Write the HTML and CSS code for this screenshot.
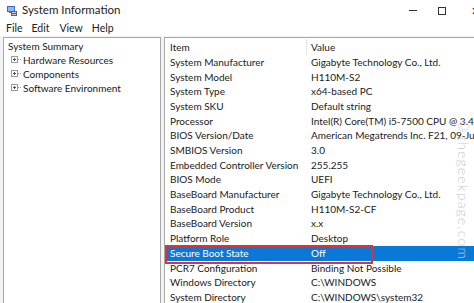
FILE: index.html
```html
<!DOCTYPE html>
<html>
<head>
<meta charset="utf-8">
<link rel="stylesheet" href="styles.css">
</head>
<body>
<div class="window">
  <div class="titlebar">
    <svg class="app-icon" width="12" height="12" viewBox="0 0 12 12">
      <rect x="1" y="1" width="8" height="6" fill="#3a6fc4"/>
      <rect x="2" y="2" width="6" height="4" fill="#8fb8ef"/>
      <rect x="3" y="7" width="4" height="1" fill="#666"/>
      <rect x="5" y="6" width="6" height="5" fill="#5a6270"/>
      <rect x="6" y="7" width="4" height="1" fill="#c9ced6"/>
      <rect x="6" y="9" width="4" height="1" fill="#c9ced6"/>
    </svg>
    <span class="title">System Information</span>
    <div class="controls">
      <span class="ctl min"></span>
      <span class="ctl max"></span>
      <span class="ctl close">✕</span>
    </div>
  </div>
  <div class="menubar">
    <span>File</span><span>Edit</span><span>View</span><span>Help</span>
  </div>
  <div class="panes">
    <div class="tree">
      <div class="node root">System Summary</div>
      <div class="node"><span class="exp"></span><span class="dots"></span>Hardware Resources</div>
      <div class="node"><span class="exp"></span><span class="dots"></span>Components</div>
      <div class="node"><span class="exp"></span><span class="dots"></span>Software Environment</div>
    </div>
    <div class="list">
      <div class="row head"><span class="c1">Item</span><span class="c2">Value</span></div>
      <div class="row"><span class="c1">System Manufacturer</span><span class="c2">Gigabyte Technology Co., Ltd.</span></div>
      <div class="row"><span class="c1">System Model</span><span class="c2">H110M-S2</span></div>
      <div class="row"><span class="c1">System Type</span><span class="c2">x64-based PC</span></div>
      <div class="row"><span class="c1">System SKU</span><span class="c2">Default string</span></div>
      <div class="row"><span class="c1">Processor</span><span class="c2">Intel(R) Core(TM) i5-7500 CPU @ 3.40GHz, 3408 Mhz</span></div>
      <div class="row"><span class="c1">BIOS Version/Date</span><span class="c2">American Megatrends Inc. F21, 09-Jun-17</span></div>
      <div class="row"><span class="c1">SMBIOS Version</span><span class="c2">3.0</span></div>
      <div class="row"><span class="c1">Embedded Controller Version</span><span class="c2">255.255</span></div>
      <div class="row"><span class="c1">BIOS Mode</span><span class="c2">UEFI</span></div>
      <div class="row"><span class="c1">BaseBoard Manufacturer</span><span class="c2">Gigabyte Technology Co., Ltd.</span></div>
      <div class="row"><span class="c1">BaseBoard Product</span><span class="c2">H110M-S2-CF</span></div>
      <div class="row"><span class="c1">BaseBoard Version</span><span class="c2">x.x</span></div>
      <div class="row"><span class="c1">Platform Role</span><span class="c2">Desktop</span></div>
      <div class="row selected"><span class="c1">Secure Boot State</span><span class="c2">Off</span><span class="highlight"></span></div>
      <div class="row"><span class="c1">PCR7 Configuration</span><span class="c2">Binding Not Possible</span></div>
      <div class="row"><span class="c1">Windows Directory</span><span class="c2">C:\WINDOWS</span></div>
      <div class="row"><span class="c1">System Directory</span><span class="c2">C:\WINDOWS\system32</span></div>
      <div class="watermark">©thegeekpage.com</div>
    </div>
  </div>
</div>
</body>
</html>
```
FILE: styles.css
```css
html, body {
  margin: 0;
  padding: 0;
  background: #ffffff;
  overflow: hidden;
}
body {
  font-family: "Lato", "Noto Sans", sans-serif;
  font-size: 10px;
  color: #1a1a1a;
  width: 474px;
  height: 303px;
}
.window {
  display: flex;
  flex-direction: column;
  height: 303px;
}
.titlebar {
  flex: none;
  box-sizing: border-box;
  height: 22px;
  padding-bottom: 3px;
  display: flex;
  align-items: center;
  padding-left: 6px;
}
.app-icon {
  margin-right: 4px;
  margin-top: 3px;
}
.title {
  font-size: 11.5px;
  color: #222;
}
.controls {
  margin-left: auto;
  display: flex;
  align-items: center;
  margin-top: 2px;
}
.ctl {
  width: 29px;
  height: 14px;
  display: flex;
  align-items: center;
  justify-content: center;
}
.min::before {
  content: "";
  width: 8px;
  height: 1px;
  background: #333;
}
.max::before {
  content: "";
  width: 6px;
  height: 6px;
  border: 1px solid #333;
}
.close {
  font-size: 11px;
  color: #333;
  justify-content: flex-end;
  margin-right: -6px;
  width: 24px;
  overflow: hidden;
}
.menubar {
  flex: none;
  box-sizing: border-box;
  height: 14px;
  padding-bottom: 3px;
  display: flex;
  align-items: center;
  padding-left: 6px;
  color: #222;
  font-size: 10.5px;
}
.menubar span {
  margin-right: 9px;
}
.menubar span:nth-child(2) { margin-right: 10px; }
.panes {
  flex: 1;
  min-height: 0;
  overflow: hidden;
  display: flex;
  gap: 3px;
  padding-left: 3px;
  background: #f3f3f3;
  padding-top: 1px;
}
.tree {
  width: 158px;
  background: #fff;
  border: 1px solid #a8a8a8;
  border-bottom: none;
  padding: 0.5px 0 0 4px;
  box-sizing: border-box;
}
.node {
  height: 14px;
  line-height: 14px;
  display: flex;
  align-items: center;
  white-space: nowrap;
}
.exp {
  width: 5px;
  height: 5px;
  border: 1px solid #9a9a9a;
  margin-left: 3px;
  position: relative;
  flex: none;
}
.exp::before {
  content: "";
  position: absolute;
  left: 1px;
  top: 2px;
  width: 3px;
  height: 1px;
  background: #555;
}
.exp::after {
  content: "";
  position: absolute;
  left: 2px;
  top: 1px;
  width: 1px;
  height: 3px;
  background: #555;
}
.dots {
  width: 3px;
  border-top: 1px dotted #9a9a9a;
  margin-right: 2px;
}
.list {
  flex: 1;
  background: #fff;
  border: 1px solid #a8a8a8;
  border-right: none;
  border-bottom: none;
  padding-top: 0.5px;
  overflow: hidden;
  position: relative;
}
.row {
  display: flex;
  flex: none;
  height: 14.69px;
  line-height: 14.69px;
  white-space: nowrap;
  position: relative;
}
.row.head {
  height: 16.4px;
  line-height: 16.4px;
}
.c1 {
  width: 136px;
  padding-left: 5px;
  flex: none;
  overflow: hidden;
}
.c2 {
  padding-left: 5px;
}
.head .c2 {
  border-left: 1px solid #e4e4e4;
  padding-left: 4px;
}
.row.selected {
  background: #0a78d7;
  color: #fff;
  margin-left: 1px;
}
.row.selected .c1 {
  padding-left: 4px;
}
.highlight {
  position: absolute;
  left: -1px;
  top: -1px;
  width: 204px;
  height: 15px;
  border: 2px solid #d9343a;
  box-sizing: content-box;
}
.watermark {
  position: absolute;
  right: 2px;
  top: 80px;
  writing-mode: vertical-rl;
  color: #c8c8c8;
  font-family: "Lato", sans-serif;
  font-weight: 300;
  font-size: 14px;
  letter-spacing: 1.2px;
}
```
